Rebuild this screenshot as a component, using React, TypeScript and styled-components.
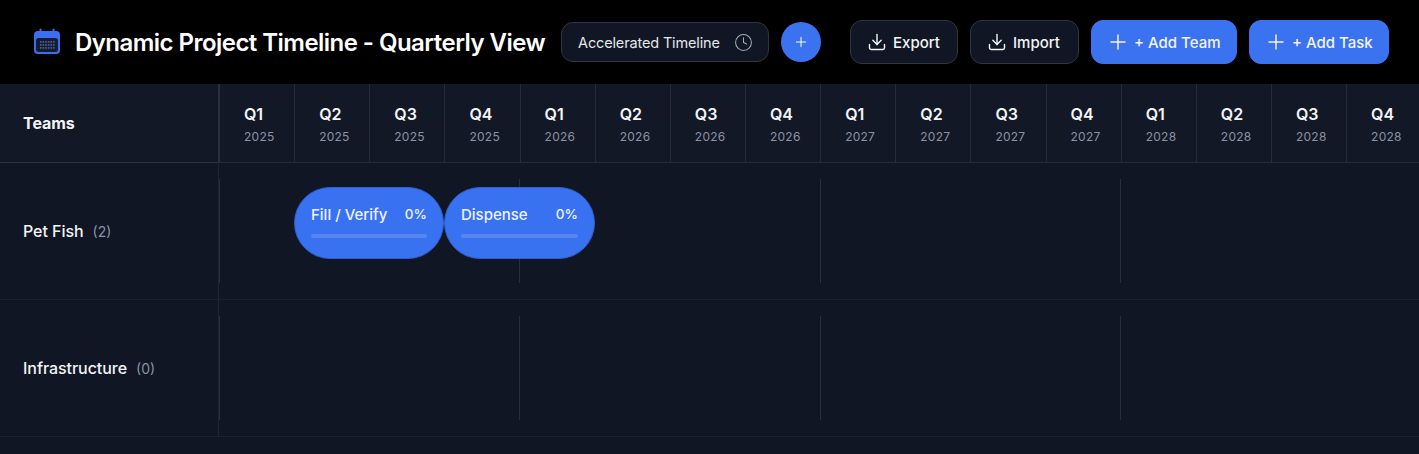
import styled, { createGlobalStyle } from "styled-components";
import { Clock, Download, Plus } from "lucide-react";

const quarters = [2025, 2026, 2027, 2028].flatMap((year) =>
  ["Q1", "Q2", "Q3", "Q4"].map((label) => ({ label, year }))
);

const teams = [
  {
    name: "Pet Fish",
    count: 2,
    tasks: [
      { name: "Fill / Verify", progress: 0, start: 75, width: 150 },
      { name: "Dispense", progress: 0, start: 225, width: 151 },
    ],
  },
  { name: "Infrastructure", count: 0, tasks: [] },
];

const CalendarIcon = () => (
  <svg width="28" height="28" viewBox="0 0 28 28" fill="none">
    <path d="M7.5 1.5v4M20.5 1.5v4" stroke="#3b6ff0" strokeWidth="2" strokeLinecap="round" />
    <rect x="1" y="3" width="26" height="23" rx="4" fill="#3b6ff0" />
    <rect x="3" y="10" width="22" height="14" rx="2.5" fill="#161d33" />
    {[0, 1, 2].map((r) =>
      [0, 1, 2, 3, 4, 5].map((c) => (
        <rect key={`${r}-${c}`} x={7 + c * 2.6} y={13 + r * 3} width="1.6" height="1.8" fill="#4a5a88" />
      ))
    )}
  </svg>
);

export default function App() {
  return (
    <>
      <GlobalStyle />
      <Page>
        <Header>
          <TitleGroup>
            <CalendarIcon />
            <Title>Dynamic Project Timeline - Quarterly View</Title>
          </TitleGroup>
          <TimelineControls>
            <TimelineSelect>
              Accelerated Timeline
              <Clock size={19} strokeWidth={1.3} color="#a6abb5" />
            </TimelineSelect>
            <RoundButton>
              <Plus size={16} strokeWidth={1.5} />
            </RoundButton>
          </TimelineControls>
          <Actions>
            <ActionButton $width={108}>
              <DownloadIcon size={20} strokeWidth={1.7} />
              Export
            </ActionButton>
            <ActionButton $width={109}>
              <DownloadIcon size={20} strokeWidth={1.7} />
              Import
            </ActionButton>
            <ActionButton $width={146} $primary>
              <PlusIcon size={24} strokeWidth={1.5} />
              + Add Team
            </ActionButton>
            <ActionButton $width={140} $primary>
              <PlusIcon size={24} strokeWidth={1.5} />
              + Add Task
            </ActionButton>
          </Actions>
        </Header>
        <HeadRow>
          <TeamsHead>Teams</TeamsHead>
          {quarters.map((q) => (
            <QuarterCell key={`${q.label}-${q.year}`}>
              <QuarterLabel>{q.label}</QuarterLabel>
              <QuarterYear>{q.year}</QuarterYear>
            </QuarterCell>
          ))}
        </HeadRow>
        {teams.map((team) => (
          <TeamRow key={team.name}>
            <TeamCell>
              <TeamName>{team.name}</TeamName>
              <TeamCount>({team.count})</TeamCount>
            </TeamCell>
            <Track>
              {[2025, 2026, 2027, 2028].map((year) => (
                <YearBlock key={year} />
              ))}
              {team.tasks.map((task) => (
                <TaskBar key={task.name} style={{ left: task.start, width: task.width }}>
                  <TaskTop>
                    <TaskName>{task.name}</TaskName>
                    <TaskPercent>{task.progress}%</TaskPercent>
                  </TaskTop>
                  <ProgressTrack />
                </TaskBar>
              ))}
            </Track>
          </TeamRow>
        ))}
      </Page>
    </>
  );
}

const GlobalStyle = createGlobalStyle`
  html, body {
    margin: 0;
    padding: 0;
    background: #101624;
    overflow: hidden;
  }
  * {
    box-sizing: border-box;
  }
  body {
    font-family: Inter, "Liberation Sans", sans-serif;
    color: #fff;
  }
`;

const Page = styled.div`
  width: 1419px;
  height: 454px;
  overflow: hidden;
  background: #101624;
`;

const Header = styled.header`
  display: flex;
  align-items: center;
  height: 84px;
  padding: 0 30px 0 33px;
  background: #000;
`;

const TitleGroup = styled.div`
  display: flex;
  align-items: center;
  gap: 14px;
`;

const Title = styled.h1`
  margin: 0;
  padding-top: 1px;
  font-size: 24px;
  line-height: 32px;
  font-weight: 600;
  letter-spacing: -0.54px;
  white-space: nowrap;
  color: #fff;
`;

const TimelineControls = styled.div`
  display: flex;
  align-items: center;
  gap: 12px;
  margin-left: 16px;
`;

const TimelineSelect = styled.div`
  display: flex;
  align-items: center;
  justify-content: space-between;
  width: 208px;
  height: 40px;
  padding: 0 15px 0 16px;
  border: 1px solid #30363f;
  border-radius: 12px;
  background: #101624;
  font-size: 14.5px;
  letter-spacing: -0.15px;
  color: #e5e7eb;
`;

const RoundButton = styled.button`
  display: flex;
  align-items: center;
  justify-content: center;
  width: 40px;
  height: 40px;
  padding: 0;
  border: 0;
  border-radius: 50%;
  background: #3b72f0;
  color: #fff;
`;

const Actions = styled.div`
  display: flex;
  align-items: center;
  gap: 12px;
  margin-left: auto;
`;

const ActionButton = styled.button<{ $primary?: boolean; $width: number }>`
  display: flex;
  align-items: center;
  gap: 7px;
  width: ${(p) => p.$width}px;
  height: 44px;
  padding: 0 0 0 17px;
  border: 1px solid ${(p) => (p.$primary ? "#3b72f0" : "#30363f")};
  border-radius: 12px;
  background: ${(p) => (p.$primary ? "#3b72f0" : "#101624")};
  color: #f3f4f6;
  font-family: inherit;
  font-size: 15px;
  font-weight: 500;
  white-space: nowrap;
`;

const DownloadIcon = styled(Download)`
  flex: none;
  margin: -1px;
`;

const PlusIcon = styled(Plus)`
  flex: none;
  margin: -3px;
`;

const HeadRow = styled.div`
  display: flex;
  height: 79px;
  background: #131826;
  border-bottom: 1px solid #252b3a;
`;

const TeamsHead = styled.div`
  display: flex;
  align-items: center;
  flex: 0 0 220px;
  padding-left: 23px;
  border-right: 2px solid #2a3040;
  border-bottom: 1px solid #2f3544;
  margin-bottom: -1px;
  font-size: 16px;
  font-weight: 700;
  letter-spacing: -0.05px;
  color: #f3f4f6;
`;

const QuarterCell = styled.div`
  flex: 0 0 75.15px;
  padding: 20px 0 0 24px;
  border-right: 1px solid #252b3a;
`;

const QuarterLabel = styled.div`
  font-size: 16px;
  line-height: 20px;
  font-weight: 600;
  color: #f3f4f6;
`;

const QuarterYear = styled.div`
  margin-top: 5px;
  font-size: 12px;
  line-height: 16px;
  letter-spacing: 0.25px;
  color: #8b92a5;
`;

const TeamRow = styled.div`
  display: flex;
  height: 137px;
  border-bottom: 1px solid #1b2130;
`;

const TeamCell = styled.div`
  display: flex;
  align-items: center;
  gap: 9px;
  flex: 0 0 219px;
  padding-left: 23px;
  border-right: 1px solid #1f2533;
`;

const TeamName = styled.span`
  font-size: 16px;
  font-weight: 500;
  letter-spacing: -0.05px;
  color: #f3f4f6;
`;

const TeamCount = styled.span`
  font-size: 14px;
  color: #8b92a5;
`;

const Track = styled.div`
  position: relative;
  display: grid;
  grid-template-columns: repeat(4, 300.4px);
  flex: 1;
  padding: 16px 0;
`;

const YearBlock = styled.div`
  height: 104px;
  border-left: 1px solid #272d3b;
`;

const TaskBar = styled.div`
  position: absolute;
  top: 24px;
  height: 72px;
  padding: 16px 16px 0;
  border-radius: 36px;
  border: 1px solid #2f5fd0;
  background: #3872f0;
`;

const TaskTop = styled.div`
  display: flex;
  align-items: center;
  justify-content: space-between;
  height: 20px;
`;

const TaskName = styled.span`
  font-size: 15px;
  font-weight: 500;
  color: #eef2ff;
`;

const TaskPercent = styled.span`
  font-size: 13.5px;
  font-weight: 500;
  color: #eef2ff;
`;

const ProgressTrack = styled.div`
  height: 4px;
  margin-top: 10px;
  border-radius: 2px;
  background: #5586f3;
`;
